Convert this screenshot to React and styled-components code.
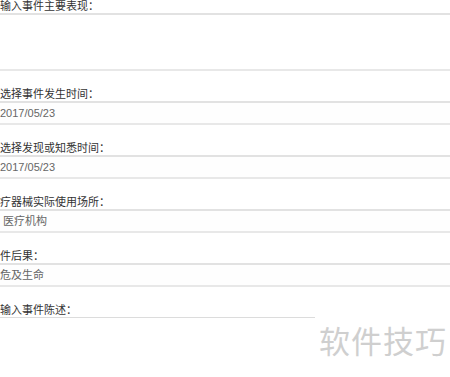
import React from "react";
import styled, { createGlobalStyle } from "styled-components";

const GlobalStyle = createGlobalStyle`
  html, body {
    margin: 0;
    padding: 0;
    background: #ffffff;
  }
  body {
    font-family: "Liberation Sans", "Noto Sans CJK SC", sans-serif;
  }
`;

const fields = [
  { label: "选择事件发生时间：", value: "2017/05/23" },
  { label: "选择发现或知悉时间：", value: "2017/05/23" },
  { label: "疗器械实际使用场所：", value: " 医疗机构" },
  { label: "件后果：", value: "危及生命" },
];

const App = () => {
  return (
    <Page>
      <GlobalStyle />
      <Form>
        <Label $first>输入事件主要表现：</Label>
        <TextArea />
        {fields.map((f) => (
          <Section key={f.label}>
            <Label>{f.label}</Label>
            <Field>{f.value}</Field>
          </Section>
        ))}
        <Label>输入事件陈述：</Label>
        <ShortLine />
      </Form>
      <Watermark>软件技巧</Watermark>
    </Page>
  );
};

export default App;

const Page = styled.div`
  position: relative;
  width: 450px;
  height: 377px;
  overflow: hidden;
  background: #fff;
`;

const Form = styled.div`
  display: flex;
  flex-direction: column;
`;

const Section = styled.div`
  display: flex;
  flex-direction: column;
`;

const Label = styled.div`
  font-size: 11px;
  line-height: 14px;
  color: #333;
  margin-top: ${(p) => (p.$first ? "-1px" : "16px")};
  white-space: pre;
`;

const TextArea = styled.div`
  height: 54px;
  border-top: 2px solid #e2e2e2;
  border-bottom: 2px solid #e8e8e8;
  background: #fff;
`;

const Field = styled.div`
  height: 20px;
  line-height: 21px;
  border-top: 2px solid #e2e2e2;
  border-bottom: 2px solid #e8e8e8;
  font-size: 11px;
  color: #666;
  white-space: pre;
  background: #fefefe;
`;

const ShortLine = styled.div`
  width: 315px;
  border-top: 1px solid #dcdcdc;
`;

const Watermark = styled.div`
  position: absolute;
  left: 319px;
  top: 322px;
  font-family: "Noto Sans CJK SC", sans-serif;
  font-size: 31px;
  line-height: 36px;
  color: #cfcfcf;
  letter-spacing: 1px;
`;
